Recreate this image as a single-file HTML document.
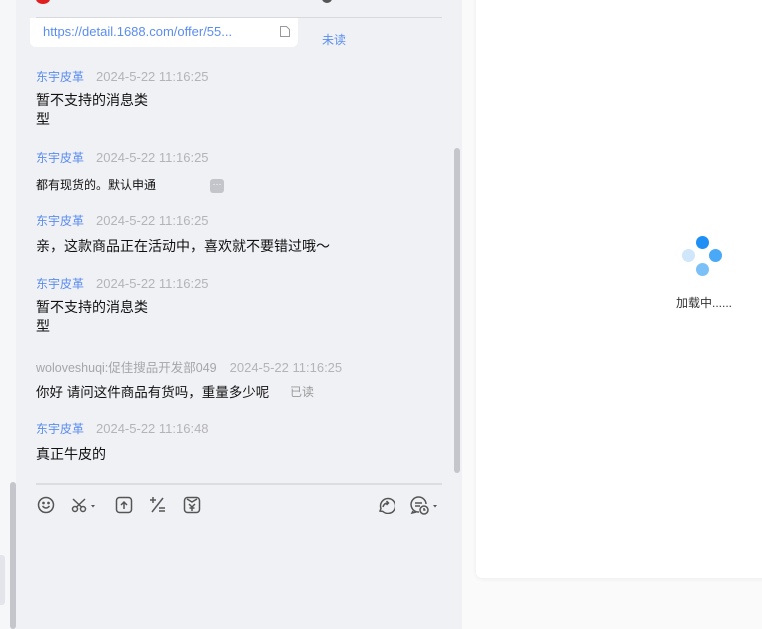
<!DOCTYPE html>
<html><head><meta charset="utf-8"><style>
*{margin:0;padding:0;box-sizing:border-box}
body{width:762px;height:629px;overflow:hidden;background:#fafafa;position:relative;font-family:"Liberation Sans","Noto Sans CJK SC",sans-serif}
.a{position:absolute;white-space:nowrap}
.n{font-size:12px;color:#5b8def}
.t{font-size:13px;color:#b4b4b8;margin-left:12px}
.b{font-size:14px;color:#111}
svg{position:absolute}
</style></head><body>
<div class="a" style="left:0;top:0;width:16px;height:629px;background:#f6f7f9"></div>
<div class="a" style="left:0;top:555px;width:5px;height:50px;background:#e3e5ea;border-radius:0 3px 3px 0"></div>
<div class="a" style="left:10px;top:482px;width:6px;height:147px;background:#c4c6cc;border-radius:3px"></div>
<div class="a" style="left:16px;top:0;width:446px;height:629px;background:#f0f1f5"></div>
<div class="a" style="left:462px;top:0;width:300px;height:629px;background:#fafafa"></div>
<div class="a" style="left:476px;top:-10px;width:300px;height:588px;background:#fff;border-radius:6px;box-shadow:0 1px 4px rgba(0,0,0,.06)"></div>
<div class="a" style="left:36px;top:-6px;width:14px;height:10px;background:#e02020;border-radius:50%"></div>
<div class="a" style="left:322px;top:-6px;width:10px;height:9px;background:#555;border-radius:50%"></div>
<div class="a" style="left:36px;top:17px;width:406px;height:1px;background:#d8d9dd"></div>
<div class="a" style="left:30px;top:18px;width:268px;height:29px;background:#fff;border-radius:0 0 6px 6px"></div>
<div class="a" style="left:43px;top:24px;font-size:13px;color:#5b8def">https://detail.1688.com/offer/55...</div>
<svg style="left:279px;top:25px" width="12" height="13" viewBox="0 0 12 13"><path d="M1.5 1.5h6l3 3v7h-9z" fill="none" stroke="#999" stroke-width="1"/></svg>
<div class="a" style="left:322px;top:31px;font-size:12px;color:#5b8def">未读</div>
<div class="a" style="left:454px;top:148px;width:6px;height:325px;background:#c4c6cc;border-radius:3px"></div>

<div class="a" style="left:36px;top:68px"><span class="n">东宇皮革</span><span class="t">2024-5-22 11:16:25</span></div>
<div class="a b" style="left:36px;top:91px;line-height:19px">暂不支持的消息类<br>型</div>
<div class="a" style="left:36px;top:149px"><span class="n">东宇皮革</span><span class="t">2024-5-22 11:16:25</span></div>
<div class="a" style="left:36px;top:176px;font-size:12px;color:#111">都有现货的。默认申通</div>
<div class="a" style="left:210px;top:179px;width:14px;height:14px;background:#c3c5cb;border-radius:3px;color:#fff;font-size:9px;line-height:10px;text-align:center">···</div>
<div class="a" style="left:36px;top:212px"><span class="n">东宇皮革</span><span class="t">2024-5-22 11:16:25</span></div>
<div class="a b" style="left:36px;top:236px">亲，这款商品正在活动中，喜欢就不要错过哦～</div>
<div class="a" style="left:36px;top:275px"><span class="n">东宇皮革</span><span class="t">2024-5-22 11:16:25</span></div>
<div class="a b" style="left:36px;top:298px;line-height:19px">暂不支持的消息类<br>型</div>
<div class="a" style="left:36px;top:357px"><span class="n" style="color:#a5a5aa;font-size:12.5px">woloveshuqi:促佳搜品开发部049</span><span class="t" style="margin-left:13px">2024-5-22 11:16:25</span></div>
<div class="a" style="left:36px;top:381px;font-size:13.5px;color:#111">你好 请问这件商品有货吗，重量多少呢</div>
<div class="a" style="left:290px;top:383px;font-size:12px;color:#999">已读</div>
<div class="a" style="left:36px;top:420px"><span class="n">东宇皮革</span><span class="t">2024-5-22 11:16:48</span></div>
<div class="a b" style="left:36px;top:444px">真正牛皮的</div>

<div class="a" style="left:36px;top:483px;width:406px;height:2px;background:#dcdde1"></div>
<svg style="left:37px;top:496px" width="18" height="18" viewBox="0 0 18 18" fill="none" stroke="#555" stroke-width="1.5"><circle cx="9" cy="9" r="7.5"/><path d="M5.5 10q3.5 4 7 0"/><circle cx="6.5" cy="7" r=".6" fill="#555"/><circle cx="11.5" cy="7" r=".6" fill="#555"/></svg>
<svg style="left:71px;top:496px" width="28" height="18" viewBox="0 0 28 18" fill="none" stroke="#555" stroke-width="1.5"><circle cx="4" cy="13" r="2.5"/><circle cx="12" cy="13" r="2.5"/><path d="M5.5 11L14 3M10.5 11L2 3"/><path d="M20 9h4l-2 2.5z" fill="#555" stroke="none"/></svg>
<svg style="left:115px;top:496px" width="18" height="18" viewBox="0 0 18 18" fill="none" stroke="#555" stroke-width="1.5"><rect x="1.5" y="1.5" width="15" height="15" rx="3"/><path d="M9 13V6M6 9l3-3 3 3"/></svg>
<svg style="left:149px;top:495px" width="18" height="20" viewBox="0 0 18 20" fill="none" stroke="#555" stroke-width="1.5"><path d="M1 5h6M4 2v6M14 3L3 17M10 13h6M10 16h6"/></svg>
<svg style="left:183px;top:496px" width="18" height="18" viewBox="0 0 18 18" fill="none" stroke="#555" stroke-width="1.5"><rect x="1.5" y="1.5" width="15" height="15" rx="3"/><path d="M4 3l5 3 5-3M6 8l3 3 3-3M9 11v4M6.5 12h5"/></svg>
<svg style="left:377px;top:496px" width="18" height="18" viewBox="0 0 18 18" fill="none" stroke="#555" stroke-width="1.5"><path d="M3 15l1-2.5A7.5 7.5 0 1 1 6 15.5z"/><path d="M6 11q1-4 5-4M9.5 5l2 2-2 2"/></svg>
<svg style="left:410px;top:496px" width="30" height="20" viewBox="0 0 30 20" fill="none" stroke="#555" stroke-width="1.5"><path d="M9 16A7.5 7.5 0 1 1 16 8M3 15l-1 2 4-1"/><path d="M5 7h7M5 10h5"/><circle cx="14" cy="14" r="4"/><path d="M14 12v2h1.5"/><path d="M23 9h4l-2 2.5z" fill="#555" stroke="none"/></svg>

<div class="a" style="left:696px;top:236px;width:13px;height:13px;border-radius:50%;background:#1e8ff5"></div>
<div class="a" style="left:682px;top:249px;width:13px;height:13px;border-radius:50%;background:#cfe6fb"></div>
<div class="a" style="left:709px;top:249px;width:13px;height:13px;border-radius:50%;background:#4aa9f7"></div>
<div class="a" style="left:696px;top:263px;width:13px;height:13px;border-radius:50%;background:#7cc0f8"></div>
<div class="a" style="left:676px;top:294px;font-size:12px;color:#333">加载中......</div>
</body></html>
